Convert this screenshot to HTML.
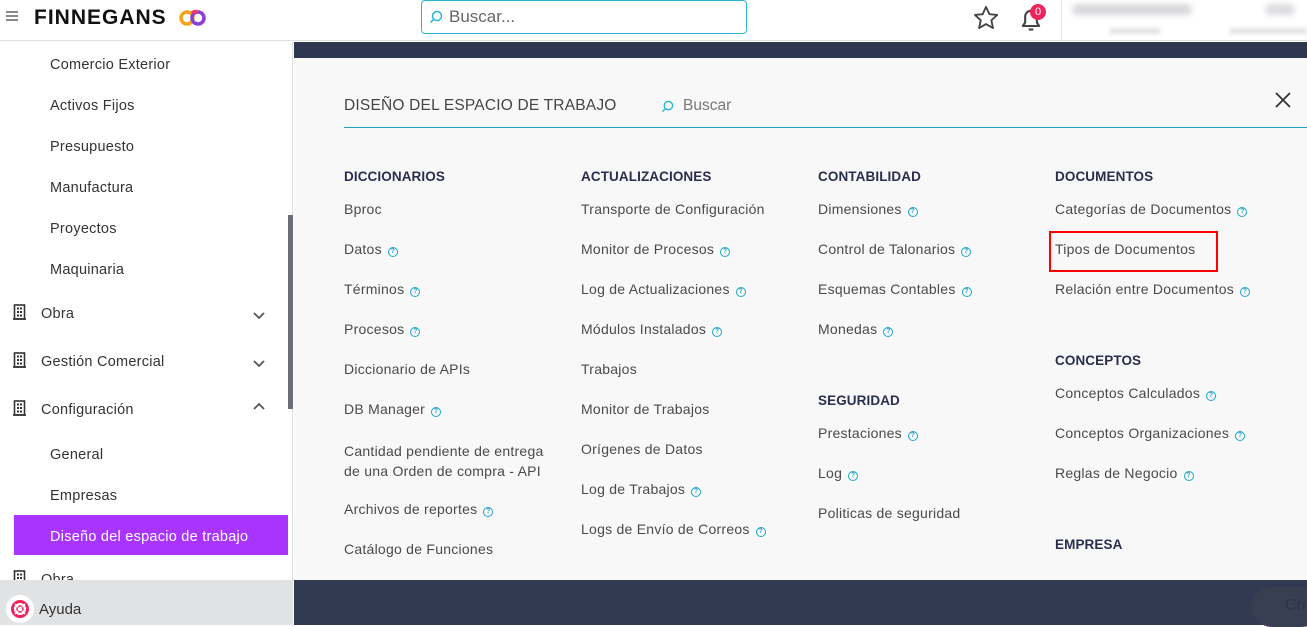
<!DOCTYPE html>
<html><head><meta charset="utf-8"><style>
*{margin:0;padding:0;box-sizing:border-box}
body{width:1307px;height:625px;overflow:hidden;position:relative;background:#fff;font-family:"Liberation Sans",sans-serif;color:#444}
.a{position:absolute;white-space:nowrap}
.it{font-size:14px;color:#4a4a4a;letter-spacing:.25px;margin-top:1px}
.h{font-size:13.5px;font-weight:bold;color:#2b2d4f;letter-spacing:.1px;margin-top:1px}
.q{display:inline-block;width:10px;height:10px;border:1.3px solid #1fa8c9;border-radius:50%;font-size:7px;line-height:8px;text-align:center;color:#1fa8c9;margin-left:6px;vertical-align:1px;font-weight:bold}
.sb{font-size:14.5px;color:#333;letter-spacing:.25px;margin-top:2px}
</style></head><body>
<!-- header -->
<div class="a" style="left:0;top:0;width:1307px;height:41px;background:#fff;border-bottom:1px solid #e0e0e0"></div>
<div class="a" style="left:6px;top:11px;width:12px;height:2px;background:#888;box-shadow:0 4px 0 #888,0 8px 0 #888"></div>
<div class="a" style="left:34px;top:6px;font-size:21px;font-weight:bold;color:#111;letter-spacing:1px">FINNEGANS</div>
<svg class="a" style="left:179px;top:9px" width="28" height="18" viewBox="0 0 28 18"><circle cx="8" cy="9" r="6" fill="none" stroke="#f7a21b" stroke-width="3.5"/><circle cx="19" cy="9" r="6" fill="none" stroke="#8a3fd8" stroke-width="3.5"/><path d="M13 4a6 6 0 0 1 6 -1" stroke="#f03a6a" stroke-width="3.5" fill="none"/></svg>
<div class="a" style="left:421px;top:0;width:326px;height:34px;border:1px solid #29b6d6;border-radius:4px;background:#fff"></div>
<svg class="a" style="left:429px;top:10px" width="14" height="14" viewBox="0 0 14 14"><circle cx="8" cy="6" r="4.5" fill="none" stroke="#29b6d6" stroke-width="1.5"/><path d="M4.8 9.2L1.5 12.5" stroke="#29b6d6" stroke-width="1.5"/></svg>
<div class="a" style="left:449px;top:7px;font-size:17px;color:#666">Buscar...</div>
<svg class="a" style="left:972px;top:4px" width="28" height="28" viewBox="0 0 24 24"><path d="M12 2.5l2.9 6.2 6.7.7-5 4.6 1.4 6.6L12 17.2l-5.9 3.4 1.4-6.6-5-4.6 6.7-.7z" fill="none" stroke="#444" stroke-width="1.6" stroke-linejoin="round"/></svg>
<svg class="a" style="left:1017px;top:5px" width="28" height="28" viewBox="0 0 24 24"><path d="M5 18h14l-2-3v-5a5 5 0 0 0-10 0v5z" fill="none" stroke="#444" stroke-width="1.8" stroke-linejoin="round"/><path d="M10 21h4" stroke="#444" stroke-width="1.8"/></svg>
<div class="a" style="left:1030px;top:4px;width:16px;height:16px;border-radius:50%;background:#f0245c;color:#fff;font-size:11px;text-align:center;line-height:16px">0</div>
<div class="a" style="left:1061px;top:0;width:1px;height:41px;background:#e6e6e6"></div>
<div class="a" style="left:1072px;top:4px;width:120px;height:11px;background:#d8d8dc;border-radius:5px;filter:blur(3px)"></div>
<div class="a" style="left:1265px;top:4px;width:30px;height:11px;background:#dcdce0;border-radius:5px;filter:blur(3px)"></div>
<div class="a" style="left:1110px;top:28px;width:50px;height:6px;background:#e2e2e6;filter:blur(2px)"></div>
<div class="a" style="left:1230px;top:28px;width:77px;height:6px;background:#e2e2e6;filter:blur(2px)"></div>
<!-- sidebar -->
<div class="a" style="left:0;top:42px;width:293px;height:540px;background:#fff;border-right:1px solid #e0e0e0"></div>
<div class="a" style="left:288px;top:215px;width:5px;height:194px;background:#6b6e76"></div>
<div class="a sb" style="left:50px;top:55px">Comercio Exterior</div>
<div class="a sb" style="left:50px;top:96px">Activos Fijos</div>
<div class="a sb" style="left:50px;top:137px">Presupuesto</div>
<div class="a sb" style="left:50px;top:178px">Manufactura</div>
<div class="a sb" style="left:50px;top:219px">Proyectos</div>
<div class="a sb" style="left:50px;top:260px">Maquinaria</div>
<svg width="0" height="0" style="position:absolute"><defs><g id="bld"><rect x="1.5" y="1" width="10" height="14" fill="none" stroke="#333" stroke-width="1.6"/><rect x="4" y="3.5" width="2" height="2" fill="#333"/><rect x="7" y="3.5" width="2" height="2" fill="#333"/><rect x="4" y="7" width="2" height="2" fill="#333"/><rect x="7" y="7" width="2" height="2" fill="#333"/><rect x="4" y="10.5" width="2" height="2" fill="#333"/><rect x="7" y="10.5" width="2" height="2" fill="#333"/><path d="M0 15h13" stroke="#333" stroke-width="1.6"/></g></defs></svg>
<svg class="a" style="left:13px;top:304px" width="14" height="17"><use href="#bld"/></svg>
<svg class="a" style="left:13px;top:352px" width="14" height="17"><use href="#bld"/></svg>
<svg class="a" style="left:13px;top:400px" width="14" height="17"><use href="#bld"/></svg>
<svg class="a" style="left:13px;top:570px" width="14" height="17"><use href="#bld"/></svg>
<div class="a sb" style="left:41px;top:304px">Obra</div>
<div class="a sb" style="left:41px;top:352px">Gestión Comercial</div>
<div class="a sb" style="left:41px;top:400px">Configuración</div>
<div class="a sb" style="left:41px;top:570px">Obra</div>
<svg class="a" style="left:253px;top:312px" width="12" height="8"><path d="M1 1l5 5 5-5" fill="none" stroke="#555" stroke-width="1.8"/></svg>
<svg class="a" style="left:253px;top:360px" width="12" height="8"><path d="M1 1l5 5 5-5" fill="none" stroke="#555" stroke-width="1.8"/></svg>
<svg class="a" style="left:253px;top:402px" width="12" height="8"><path d="M1 7l5-5 5 5" fill="none" stroke="#555" stroke-width="1.8"/></svg>
<div class="a sb" style="left:50px;top:445px">General</div>
<div class="a sb" style="left:50px;top:486px">Empresas</div>
<div class="a" style="left:14px;top:515px;width:274px;height:40px;background:#a934ff"></div>
<div class="a sb" style="left:50px;top:527px;color:#fff">Diseño del espacio de trabajo</div>
<div class="a" style="left:0;top:580px;width:293px;height:45px;background:#e1e2e4"></div>
<div class="a" style="left:6px;top:595px;width:28px;height:28px;border-radius:50%;background:#fff"></div>
<svg class="a" style="left:10px;top:599px" width="20" height="20" viewBox="0 0 20 20"><circle cx="10" cy="10" r="7.5" fill="none" stroke="#f0245c" stroke-width="3"/><circle cx="10" cy="10" r="3" fill="none" stroke="#f0245c" stroke-width="1.5"/><path d="M5 5l3 3M15 5l-3 3M5 15l3-3M15 15l-3-3" stroke="#fff" stroke-width="1.5"/></svg>
<div class="a" style="left:39px;top:601px;font-size:15px;color:#333">Ayuda</div>
<!-- main -->
<div class="a" style="left:294px;top:42px;width:1013px;height:16px;background:#2d3850"></div>
<div class="a" style="left:294px;top:58px;width:1013px;height:522px;background:#f8f8f8"></div>
<div class="a" style="left:294px;top:580px;width:1013px;height:45px;background:#323a52"></div>
<div class="a" style="left:1252px;top:587px;width:70px;height:40px;border-radius:20px;background:#393f52"></div>
<div class="a" style="left:1285px;top:597px;font-size:16px;color:#2d3348">Ch</div>
<div class="a" style="left:344px;top:97px;font-size:15.5px;color:#444;letter-spacing:.2px">DISEÑO DEL ESPACIO DE TRABAJO</div>
<svg class="a" style="left:661px;top:100px" width="13" height="13" viewBox="0 0 14 14"><circle cx="8" cy="6" r="4.5" fill="none" stroke="#29b6d6" stroke-width="1.5"/><path d="M4.8 9.2L1.5 12.5" stroke="#29b6d6" stroke-width="1.5"/></svg>
<div class="a" style="left:683px;top:97px;font-size:15.5px;color:#777">Buscar</div>
<div class="a" style="left:344px;top:127px;width:963px;height:1px;background:#1fa0c8"></div>
<svg class="a" style="left:1274px;top:91px" width="18" height="18"><path d="M2 2l14 14M16 2L2 16" stroke="#333" stroke-width="1.8"/></svg>

<div class="a h" style="left:344px;top:168px">DICCIONARIOS</div>
<div class="a it" style="left:344px;top:200px">Bproc</div>
<div class="a it" style="left:344px;top:240px">Datos<span class="q">?</span></div>
<div class="a it" style="left:344px;top:280px">Términos<span class="q">?</span></div>
<div class="a it" style="left:344px;top:320px">Procesos<span class="q">?</span></div>
<div class="a it" style="left:344px;top:360px">Diccionario de APIs</div>
<div class="a it" style="left:344px;top:400px">DB Manager<span class="q">?</span></div>
<div class="a it" style="left:344px;top:440px;line-height:20px">Cantidad pendiente de entrega<br>de una Orden de compra - API</div>
<div class="a it" style="left:344px;top:500px">Archivos de reportes<span class="q">?</span></div>
<div class="a it" style="left:344px;top:540px">Catálogo de Funciones</div>

<div class="a h" style="left:581px;top:168px">ACTUALIZACIONES</div>
<div class="a it" style="left:581px;top:200px">Transporte de Configuración</div>
<div class="a it" style="left:581px;top:240px">Monitor de Procesos<span class="q">?</span></div>
<div class="a it" style="left:581px;top:280px">Log de Actualizaciones<span class="q">?</span></div>
<div class="a it" style="left:581px;top:320px">Módulos Instalados<span class="q">?</span></div>
<div class="a it" style="left:581px;top:360px">Trabajos</div>
<div class="a it" style="left:581px;top:400px">Monitor de Trabajos</div>
<div class="a it" style="left:581px;top:440px">Orígenes de Datos</div>
<div class="a it" style="left:581px;top:480px">Log de Trabajos<span class="q">?</span></div>
<div class="a it" style="left:581px;top:520px">Logs de Envío de Correos<span class="q">?</span></div>

<div class="a h" style="left:818px;top:168px">CONTABILIDAD</div>
<div class="a it" style="left:818px;top:200px">Dimensiones<span class="q">?</span></div>
<div class="a it" style="left:818px;top:240px">Control de Talonarios<span class="q">?</span></div>
<div class="a it" style="left:818px;top:280px">Esquemas Contables<span class="q">?</span></div>
<div class="a it" style="left:818px;top:320px">Monedas<span class="q">?</span></div>
<div class="a h" style="left:818px;top:392px">SEGURIDAD</div>
<div class="a it" style="left:818px;top:424px">Prestaciones<span class="q">?</span></div>
<div class="a it" style="left:818px;top:464px">Log<span class="q">?</span></div>
<div class="a it" style="left:818px;top:504px">Politicas de seguridad</div>

<div class="a h" style="left:1055px;top:168px">DOCUMENTOS</div>
<div class="a it" style="left:1055px;top:200px">Categorías de Documentos<span class="q">?</span></div>
<div class="a" style="left:1049px;top:231px;width:169px;height:41px;border:2px solid #f00"></div>
<div class="a it" style="left:1055px;top:240px">Tipos de Documentos</div>
<div class="a it" style="left:1055px;top:280px">Relación entre Documentos<span class="q">?</span></div>
<div class="a h" style="left:1055px;top:352px">CONCEPTOS</div>
<div class="a it" style="left:1055px;top:384px">Conceptos Calculados<span class="q">?</span></div>
<div class="a it" style="left:1055px;top:424px">Conceptos Organizaciones<span class="q">?</span></div>
<div class="a it" style="left:1055px;top:464px">Reglas de Negocio<span class="q">?</span></div>
<div class="a h" style="left:1055px;top:536px">EMPRESA</div>
</body></html>
